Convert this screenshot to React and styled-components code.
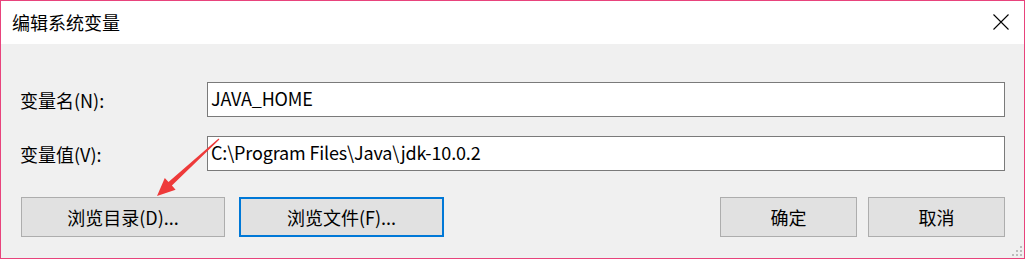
import React from "react";
import styled, { createGlobalStyle } from "styled-components";

const Global = createGlobalStyle`
  html, body {
    margin: 0;
    padding: 0;
    background: #ffffff;
  }
  * {
    box-sizing: border-box;
  }
`;

const Window = styled.div`
  position: relative;
  width: 1025px;
  height: 259px;
  border: 1px solid #e8437c;
  background: #f0f0f0;
  font-family: "Noto Sans CJK SC", "Noto Sans", sans-serif;
  color: #000;
  display: flex;
  flex-direction: column;
`;

const TitleBar = styled.div`
  height: 43px;
  background: #ffffff;
  display: flex;
  align-items: center;
  justify-content: space-between;
  padding: 0 15px 2px 11px;
  font-size: 18px;
`;

const CloseButton = styled.div`
  width: 16px;
  height: 16px;
  display: flex;
`;

const Body = styled.div`
  flex: 1;
  padding: 38px 19px 0 19px;
  display: flex;
  flex-direction: column;
`;

const Fields = styled.div`
  display: grid;
  grid-template-columns: 187px 1fr;
  row-gap: 19px;
  align-items: center;
`;

const Label = styled.div`
  font-size: 18px;
  line-height: 34px;
  padding-top: 1px;
`;

const Input = styled.div`
  height: 35px;
  background: #ffffff;
  border: 1px solid #7a7a7a;
  font-size: 18px;
  line-height: 30px;
  padding-left: 3px;
  letter-spacing: -0.15px;
  white-space: nowrap;
`;

const Buttons = styled.div`
  margin-top: 26px;
  display: flex;
  align-items: center;
  padding-left: 1px;
`;

const Group = styled.div`
  display: flex;
  gap: ${(p) => p.$gap}px;
  margin-left: ${(p) => (p.$push ? "auto" : "0")};
`;

const Button = styled.div`
  width: ${(p) => p.$w}px;
  height: 40px;
  background: #e1e1e1;
  border: ${(p) => (p.$focus ? "2px solid #0078d7" : "1px solid #adadad")};
  font-size: 18px;
  display: flex;
  align-items: center;
  justify-content: center;
  padding-bottom: 1px;
`;

const Overlay = styled.svg`
  position: absolute;
  left: 0;
  top: 0;
  pointer-events: none;
`;

const Grip = styled.svg`
  position: absolute;
  right: 2px;
  bottom: 2px;
`;

export default function App() {
  return (
    <>
      <Global />
      <Window>
        <TitleBar>
          <span>编辑系统变量</span>
          <CloseButton>
            <svg width="16" height="16" viewBox="0 0 16 16">
              <path d="M0.5 0.5 L15.5 15.5 M15.5 0.5 L0.5 15.5" stroke="#000" strokeWidth="1.1" fill="none" />
            </svg>
          </CloseButton>
        </TitleBar>
        <Body>
          <Fields>
            <Label>变量名(N):</Label>
            <Input>JAVA_HOME</Input>
            <Label>变量值(V):</Label>
            <Input>C:\Program Files\Java\jdk-10.0.2</Input>
          </Fields>
          <Buttons>
            <Group $gap={14}>
              <Button $w={204}>浏览目录(D)...</Button>
              <Button $w={205} $focus>浏览文件(F)...</Button>
            </Group>
            <Group $gap={11} $push>
              <Button $w={137}>确定</Button>
              <Button $w={137}>取消</Button>
            </Group>
          </Buttons>
        </Body>
        <Overlay width="1025" height="259" viewBox="0 0 1025 259">
          <polygon
            points="218.4,138.4 170.9,184.6 174.6,188.7 156,195 163.8,176.9 167.5,181 217.6,137.6"
            fill="#ee3a3a"
          />
        </Overlay>
        <Grip width="10" height="10" viewBox="0 0 10 10">
          <rect x="8" y="0" width="2" height="2" fill="#bcbcbc" />
          <rect x="4" y="4" width="2" height="2" fill="#bcbcbc" />
          <rect x="8" y="4" width="2" height="2" fill="#bcbcbc" />
          <rect x="0" y="8" width="2" height="2" fill="#bcbcbc" />
          <rect x="4" y="8" width="2" height="2" fill="#bcbcbc" />
          <rect x="8" y="8" width="2" height="2" fill="#bcbcbc" />
        </Grip>
      </Window>
    </>
  );
}
